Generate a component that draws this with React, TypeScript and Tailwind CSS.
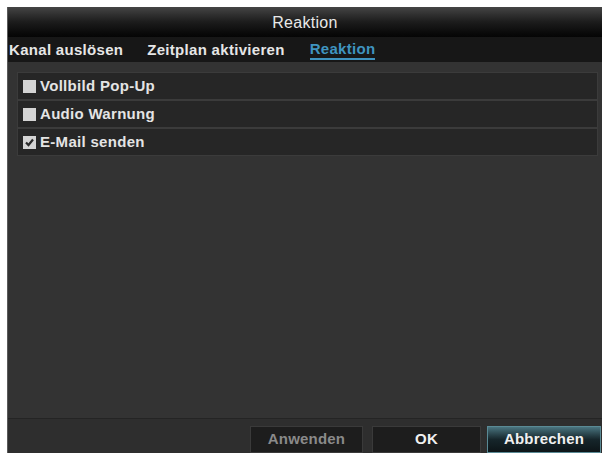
import React from 'react'

const tabs = ['Kanal auslösen', 'Zeitplan aktivieren', 'Reaktion']

const options = [
  { label: 'Vollbild Pop-Up', checked: false },
  { label: 'Audio Warnung', checked: false },
  { label: 'E-Mail senden', checked: true },
]

const Checkbox = ({ checked }: { checked: boolean }) => (
  <div className="w-[13px] h-[13px] bg-[#d4d4d4] flex items-center justify-center shrink-0">
    {checked && (
      <svg width="11" height="11" viewBox="0 0 11 11">
        <path d="M2 5.5 L4.5 8 L9 2.5" fill="none" stroke="#2a2a2a" strokeWidth="2.2" />
      </svg>
    )}
  </div>
)

const App = () => {
  return (
    <div
      className="w-[604px] h-[456px] bg-white pt-[7px] pl-[7px] overflow-hidden"
      style={{ fontFamily: '"Liberation Sans", Arial, sans-serif' }}
    >
      <div className="w-[595px] h-[446px] flex flex-col border-l border-[#5a5a5a] bg-[#333333]">
        {/* title */}
        <div className="h-[30px] bg-gradient-to-b from-[#454545] via-[#1c1c1c] to-[#050505] flex items-center justify-center text-[16px] tracking-[0.3px] text-[#e8e8e8] pt-[2px]">
          Reaktion
        </div>

        {/* tabs */}
        <div className="h-[25px] bg-[#171717] flex items-center gap-[24px] px-[1px] text-[15px] tracking-[0.3px] font-bold">
          {tabs.map((t, i) => (
            <span
              key={t}
              className={
                i === 2
                  ? 'text-[#3f94c0] border-b-2 border-[#3f94c0] leading-[18px] ml-[1px]'
                  : 'text-[#e6e6e6] leading-[18px]'
              }
            >
              {t}
            </span>
          ))}
        </div>

        {/* content */}
        <div className="flex-1 pl-[9px] pr-[4px] pt-[10px] border-b border-[#242424]">
          <div className="flex flex-col gap-[2px] border border-[#3b3b3b] bg-[#3b3b3b]">
            {options.map((o) => (
              <div key={o.label} className="h-[26px] bg-[#262626] flex items-center gap-[4px] pl-[5px]">
                <Checkbox checked={o.checked} />
                <span className="text-[15px] tracking-[0.3px] font-bold text-[#e4e4e4]">{o.label}</span>
              </div>
            ))}
          </div>
        </div>

        {/* footer */}
        <div className="h-[34px] bg-[#2e2e2e] flex items-end justify-end pr-[1px] pt-[7px]">
          <div className="flex h-[27px] text-[15px] tracking-[0.2px] font-bold">
            <button className="w-[113px] h-full bg-[#1d1d1d] border border-[#3a3a3a] text-[#8a8a8a]">
              Anwenden
            </button>
            <button className="w-[109px] h-full ml-[9px] bg-[#1d1d1d] border border-[#3a3a3a] text-[#f0f0f0]">
              OK
            </button>
            <button className="w-[114px] h-full ml-[6px] bg-gradient-to-b from-[#4a7580] via-[#16262b] to-[#0d1518] border border-[#5a8a95] text-[#f0f0f0]">
              Abbrechen
            </button>
          </div>
        </div>
      </div>
    </div>
  )
}

export default App
